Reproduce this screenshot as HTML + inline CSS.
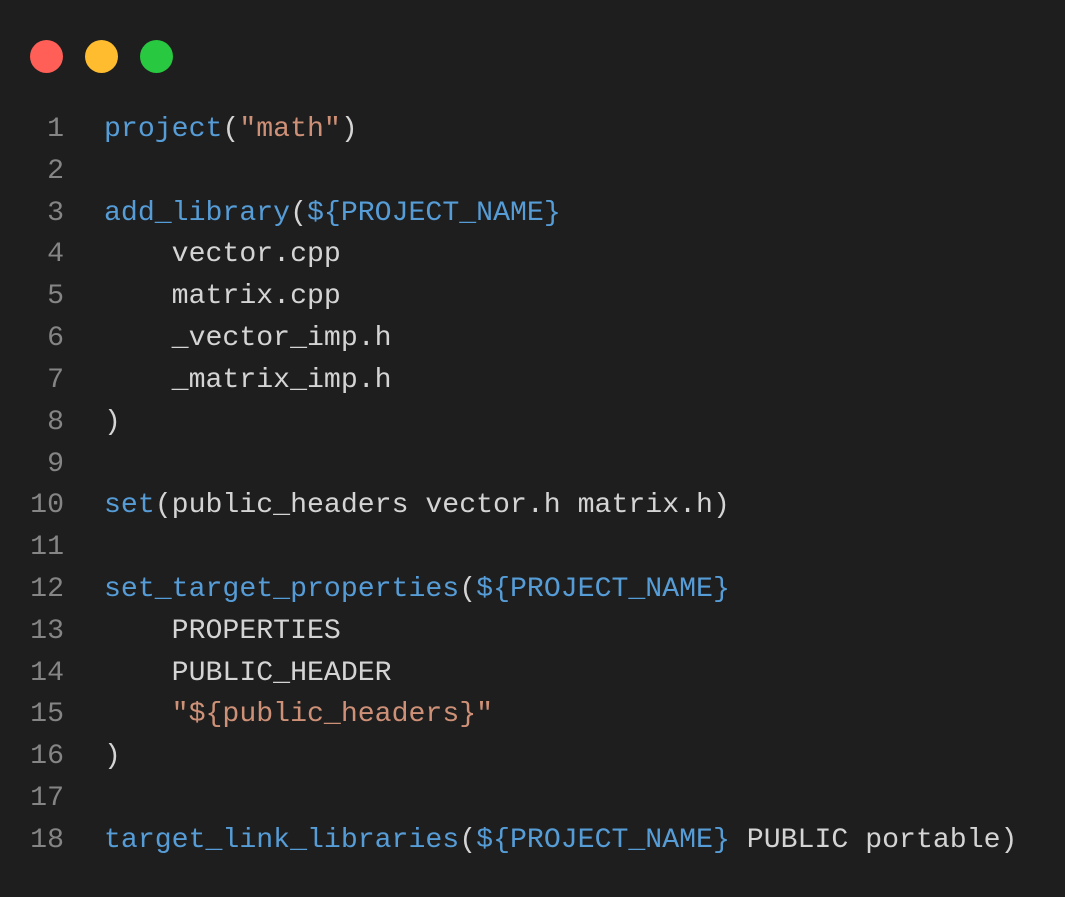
<!DOCTYPE html>
<html><head><meta charset="utf-8"><style>
html,body{margin:0;padding:0;background:#1e1e1e;width:1065px;height:897px;overflow:hidden}
.dot{position:absolute;top:40px;width:33px;height:33px;border-radius:50%}
.code{position:absolute;left:0;top:109px;font-family:"Liberation Mono",monospace;font-size:28.2px;line-height:41.82px;color:#d4d4d4;white-space:pre}
.ln{display:inline-block;width:64px;text-align:right;color:#858585;margin-right:40px}
.f{color:#569cd6}.s{color:#ce9178}
</style></head><body>
<div class="dot" style="left:30px;background:#ff5f57"></div>
<div class="dot" style="left:85px;background:#febc2e"></div>
<div class="dot" style="left:140px;background:#28c840"></div>
<div class="code"><div><span class="ln">1</span><span class="f">project</span>(<span class="s">"math"</span>)</div><div><span class="ln">2</span></div><div><span class="ln">3</span><span class="f">add_library</span>(<span class="f">${PROJECT_NAME}</span></div><div><span class="ln">4</span>    vector.cpp</div><div><span class="ln">5</span>    matrix.cpp</div><div><span class="ln">6</span>    _vector_imp.h</div><div><span class="ln">7</span>    _matrix_imp.h</div><div><span class="ln">8</span>)</div><div><span class="ln">9</span></div><div><span class="ln">10</span><span class="f">set</span>(public_headers vector.h matrix.h)</div><div><span class="ln">11</span></div><div><span class="ln">12</span><span class="f">set_target_properties</span>(<span class="f">${PROJECT_NAME}</span></div><div><span class="ln">13</span>    PROPERTIES</div><div><span class="ln">14</span>    PUBLIC_HEADER</div><div><span class="ln">15</span>    <span class="s">"${public_headers}"</span></div><div><span class="ln">16</span>)</div><div><span class="ln">17</span></div><div><span class="ln">18</span><span class="f">target_link_libraries</span>(<span class="f">${PROJECT_NAME}</span> PUBLIC portable)</div></div>
</body></html>
